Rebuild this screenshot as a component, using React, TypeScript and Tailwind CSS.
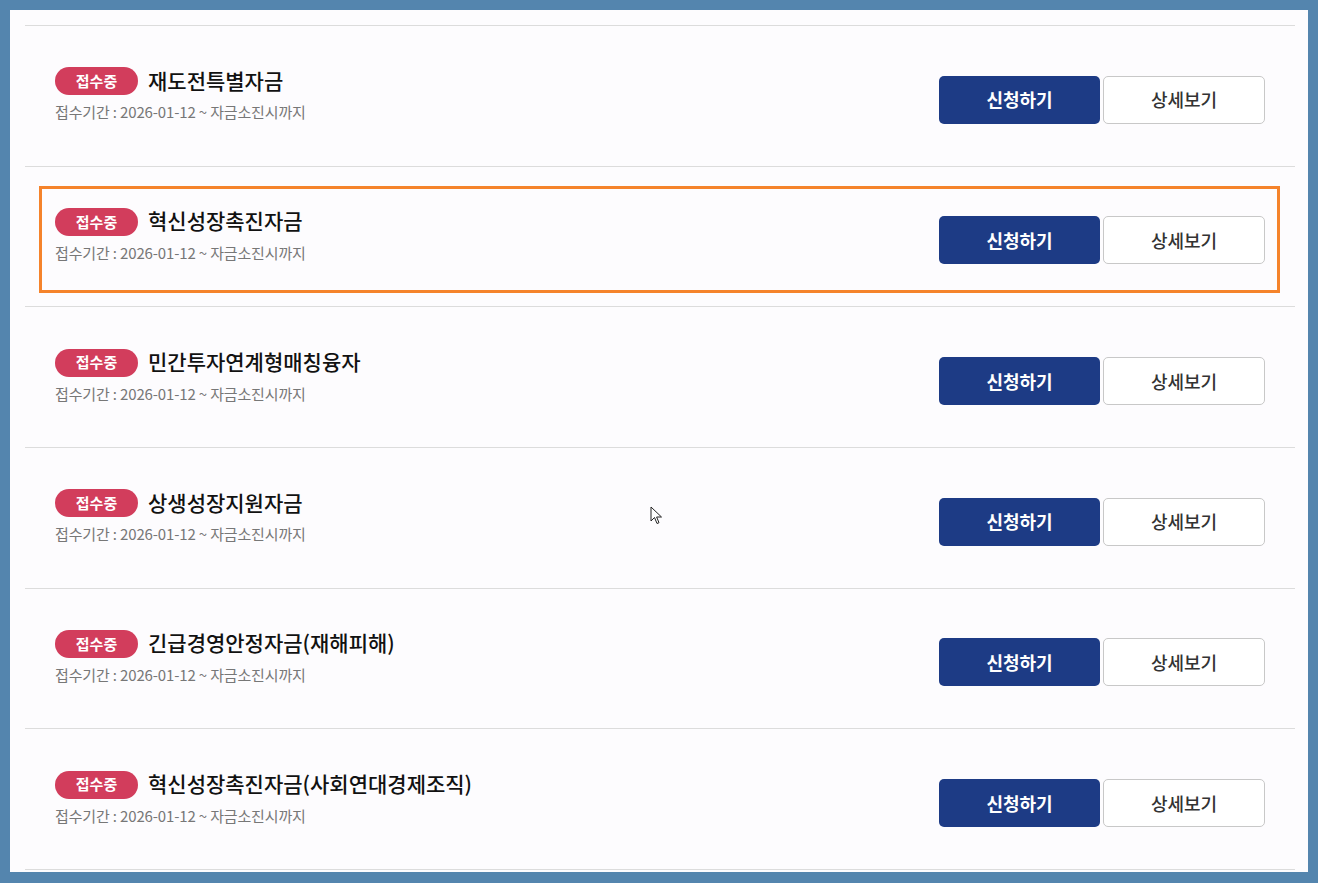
import React from "react";

const items = [
  "재도전특별자금",
  "혁신성장촉진자금",
  "민간투자연계형매칭융자",
  "상생성장지원자금",
  "긴급경영안정자금(재해피해)",
  "혁신성장촉진자금(사회연대경제조직)",
];

export default function App() {
  return (
    <div
      className="w-[1318px] h-[883px] bg-[#5485ae] pt-[10px] pl-[10px] pr-[10px] pb-[11px]"
      style={{ fontFamily: '"Noto Sans CJK KR", "Noto Sans", sans-serif' }}
    >
      <div className="relative w-full h-full bg-[#fdfcfe] pt-[15px] pl-[15px] pr-[13px]">
        <div className="border-t border-[#dcdcdc]">
          {items.map((t, i) => (
            <div
              key={i}
              className="relative h-[140.67px] border-b border-[#dcdcdc] flex items-center justify-between pl-[30px] pr-[30px]"
            >
              {i === 1 && (
                <div className="absolute left-[14px] right-[15px] top-[19px] bottom-[13px] border-[3px] border-[#f5832b] pointer-events-none" />
              )}
              <div className="flex flex-col -mt-[2px]">
                <div className="flex items-center gap-[10px]">
                  <span className="w-[83px] h-[28px] rounded-full bg-[#d23d5c] text-white text-[15px] font-bold flex items-center justify-center">
                    접수중
                  </span>
                  <span className="text-[21px] font-medium text-[#111] leading-[28px] -mt-[3px]">
                    {t}
                  </span>
                </div>
                <div className="mt-[7px] text-[15px] text-[#777] tracking-[-0.01em] leading-[20px]">
                  접수기간 : 2026-01-12 ~ 자금소진시까지
                </div>
              </div>
              <div className="flex gap-[3px] mt-[8px]">
                <button className="w-[161px] h-[48px] rounded-[5px] bg-[#1d3b85] text-white text-[18px] font-bold">
                  신청하기
                </button>
                <button className="w-[162px] h-[48px] rounded-[5px] bg-white border border-[#c8c8c8] text-[#333] text-[18px] font-medium">
                  상세보기
                </button>
              </div>
            </div>
          ))}
        </div>
        <svg
          className="absolute left-[640px] top-[496px]"
          width="14"
          height="20"
          viewBox="0 0 14 20"
        >
          <path
            d="M1 1 L1 15 L4.5 11.5 L7 17.5 L9 16.7 L6.6 11 L11.5 11 Z"
            fill="white"
            stroke="#222"
            strokeWidth="1"
            strokeLinejoin="round"
          />
        </svg>
      </div>
    </div>
  );
}
